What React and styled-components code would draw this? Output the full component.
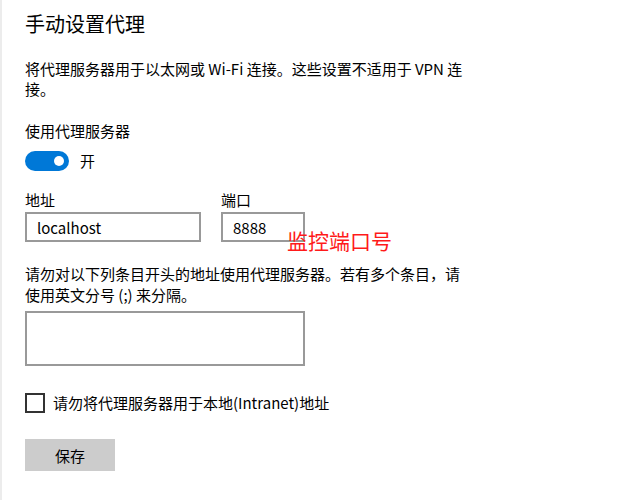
import React from "react";
import styled, { createGlobalStyle } from "styled-components";

const Global = createGlobalStyle`
  html, body { margin: 0; padding: 0; background: #fff; }
  body { font-family: "Noto Sans CJK SC", "Noto Sans", sans-serif; color: #000; }
  * { box-sizing: border-box; }
`;

const Page = styled.div`
  width: 625px;
  height: 500px;
  border-left: 2px solid #ececec;
  padding-left: 23px;
  display: flex;
  flex-direction: column;
  overflow: hidden;
`;

const Title = styled.h1`
  margin: 10px 0 0;
  font-size: 20px;
  line-height: 28px;
  font-weight: 400;
`;

const Text = styled.p`
  margin: ${(p) => p.$mt || 0}px 0 0;
  font-size: 15px;
  line-height: ${(p) => p.$lh || 20}px;
  white-space: nowrap;
`;

const ToggleRow = styled.div`
  margin-top: 10px;
  display: flex;
  align-items: center;
  gap: 11px;
  font-size: 15px;
  line-height: 20px;
`;

const Toggle = styled.span`
  width: 44px;
  height: 20px;
  border-radius: 10px;
  background: #0078d7;
  display: flex;
  align-items: center;
  justify-content: flex-end;
  padding-right: 5px;
`;

const Knob = styled.span`
  width: 10px;
  height: 10px;
  border-radius: 50%;
  background: #fff;
`;

const Fields = styled.div`
  margin-top: 19px;
  display: flex;
  gap: 20px;
`;

const Field = styled.div`
  position: relative;
  display: flex;
  flex-direction: column;
  gap: 2px;
`;

const Label = styled.span`
  font-size: 15px;
  line-height: 20px;
`;

const Input = styled.div`
  width: ${(p) => p.$w}px;
  height: 30px;
  border: 2px solid #999;
  padding-left: 10px;
  display: flex;
  align-items: center;
  font-size: 15px;
  background: #fff;
`;

const Note = styled.span`
  position: absolute;
  left: 66px;
  top: 37px;
  font-size: 21px;
  line-height: 26px;
  color: #ff1a1a;
  white-space: nowrap;
`;

const TextArea = styled.div`
  margin-top: 6px;
  width: 280px;
  height: 55px;
  border: 2px solid #999;
`;

const CheckRow = styled.label`
  margin-top: 27px;
  display: flex;
  align-items: center;
  gap: 8px;
  font-size: 15px;
  line-height: 20px;
`;

const Box = styled.span`
  width: 20px;
  height: 20px;
  border: 2px solid #333;
`;

const Button = styled.button`
  margin-top: 26px;
  width: 90px;
  height: 32px;
  border: none;
  background: #ccc;
  font-family: inherit;
  font-size: 15px;
  color: #000;
  padding: 0;
`;

export default function App() {
  return (
    <>
      <Global />
      <Page>
        <Title>手动设置代理</Title>
        <Text $mt={21}>
          将代理服务器用于以太网或 Wi-Fi 连接。这些设置不适用于 VPN 连
          <br />
          接。
        </Text>
        <Text $mt={22}>使用代理服务器</Text>
        <ToggleRow>
          <Toggle>
            <Knob />
          </Toggle>
          <span>开</span>
        </ToggleRow>
        <Fields>
          <Field>
            <Label>地址</Label>
            <Input $w={176}>localhost</Input>
          </Field>
          <Field>
            <Label>端口</Label>
            <Input $w={84}>8888</Input>
            <Note>监控端口号</Note>
          </Field>
        </Fields>
        <Text $mt={21} $lh={21}>
          请勿对以下列条目开头的地址使用代理服务器。若有多个条目，请
          <br />
          使用英文分号 (;) 来分隔。
        </Text>
        <TextArea />
        <CheckRow>
          <Box />
          <span>请勿将代理服务器用于本地(Intranet)地址</span>
        </CheckRow>
        <Button>保存</Button>
      </Page>
    </>
  );
}
